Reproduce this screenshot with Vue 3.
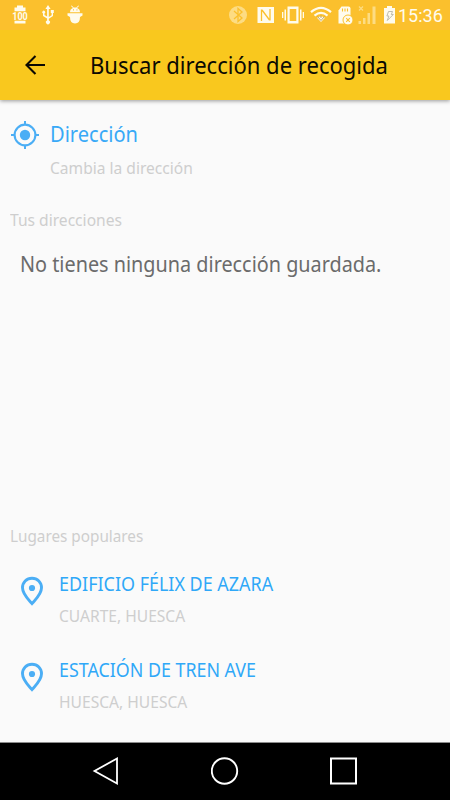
<script setup>
const places = [
  { name: 'EDIFICIO FÉLIX DE AZARA', town: 'CUARTE, HUESCA', key: 'azara' },
  { name: 'ESTACIÓN DE TREN AVE', town: 'HUESCA, HUESCA', key: 'tren' },
]
</script>

<template>
  <div class="screen">
    <div class="status">
      <svg class="status-icons" width="396" height="30" viewBox="0 0 396 30">
        <g fill="#fffbed">
          <path d="M17 5.500h6v2h2.500v4h-11v-4H17zM14.500 20.500h11v3h-11zM14 12h12v8H14z" />
          <path d="M12 11.500h16v9H12z" fill="#fbc02d" />
          <text x="12.200" y="20" class="battery-text" textLength="15.600" lengthAdjust="spacingAndGlyphs">100</text>
          <path d="M48 5l2.600 4h-1.800v8l2.800-1.800V13h-.8v-3h3v3H53v3l-4.200 2.700v1.800a2 2 0 1 1-1.700 0v-2L43 16v-2.500a1.500 1.500 0 1 1 1.500 0V15l2.600 1.500V9h-1.700z" />
          <path d="M70 12.300q0-3.300 3-4.300l-2-2 .7-.6L73.600 7.500h2.800L78.300 5.400l.7.600-2 2q3 1 3 4.300z" />
          <path d="M67.500 13.300h15v2.200l-2.500 1.500q0 6.500-5 6.500t-5-6.500l-2.500-1.500z" />
          <path d="M257.500 7h16.500v16h-16.500z" />
          <path d="M287.500 6.500h11v17h-11zM289.700 9v12h6.600V9z" fill-rule="evenodd" />
          <path d="M284.500 9.500h1.500v11h-1.500zM300 9.500h1.500v11H300zM282 12h1.300v6H282zM302.700 12h1.300v6h-1.300z" />
          <path d="M341.500 6.500h7q2 0 2 2v7.500l-4 7.500h-8V10.500z" />
          <path d="M387 6h5v2h3v15.500h-11V8h3z" />
          <circle cx="348" cy="20" r="5" stroke="#fbc02d" />
        </g>
        <path d="M73 9.800h.9M76.500 9.800h.9" stroke="#fbc02d" stroke-width="1.200" />
        <path d="M261.500 21V9.500M262 10l7.500 10M270 20.500V9" fill="none" stroke="#fbc02d" stroke-width="1.300" />
        <path d="M342.500 8.500v3M345 8.500v3M347.500 8.500v3M346.200 18.200l3.600 3.600M349.800 18.200l-3.600 3.600" stroke="#fbc02d" stroke-width="1.100" />
        <circle cx="238" cy="15" r="9" fill="#fddc83" />
        <path d="M234 11l8 7-4 3.500v-13l4 3.500-8 7" fill="none" stroke="#fbc02d" stroke-width="1.300" />
        <g fill="none" stroke="#fffbed" stroke-width="2.200">
          <path d="M311 12.200q10-8.500 20 0" /><path d="M314.500 15.600q6.500-5.600 13 0" />
        </g>
        <path d="M317 17.800q4-2.600 8 0l-4 4.200z" fill="#fffbed" />
        <path d="M317.500 16.500l3.500 4 3.500-4M321 15.500v2.500" fill="none" stroke="#b39d66" stroke-width=".9" />
        <g fill="#fddc83"><path d="M358.500 21h2.500v3h-2.500zM363 18h2.500v6H363zM367.500 13h2.500V24h-2.500zM372.500 6.500h3V24h-3z" /></g>
        <path d="M359 6.500l4 4M363 6.500l-4 4" stroke="#fddc83" stroke-width="1.200" />
        <path d="M388.500 11.500h4l-1.200 3h2l-6 6 1.600-4.500h-2z" fill="none" stroke="#b8b5a8" stroke-width=".9" />
      </svg>
      <span class="clock">15:36</span>
    </div>

    <header class="bar">
      <svg class="back" width="22" height="22" viewBox="0 0 22 22">
        <path d="M21 11H3M11.500 2L2.500 11l9 9" fill="none" stroke="#0c0a02" stroke-width="2.100" />
      </svg>
      <h1 class="title"><span class="fit fit-title">Buscar dirección de recogida</span></h1>
    </header>

    <main class="content">
      <section class="current">
        <svg class="target" width="30" height="30" viewBox="0 0 30 30">
          <circle cx="15" cy="15" r="10.400" fill="none" stroke="#4baef5" stroke-width="2.100" />
          <circle cx="15" cy="15" r="5.200" fill="#4baef5" />
          <path d="M15 1v4M15 25v4M1 15h4M25 15h4" stroke="#4baef5" stroke-width="2" />
        </svg>
        <div class="lines">
          <div class="heading"><span class="fit fit-heading">Dirección</span></div>
          <div class="small change"><span class="fit fit-change">Cambia la dirección</span></div>
        </div>
      </section>

      <h2 class="small label"><span class="fit fit-yours">Tus direcciones</span></h2>
      <p class="empty"><span class="fit fit-empty">No tienes ninguna dirección guardada.</span></p>

      <h2 class="small label popular"><span class="fit fit-popular">Lugares populares</span></h2>
      <ul class="places">
        <li v-for="p in places" :key="p.key" class="place">
          <svg class="pin" width="24" height="30" viewBox="0 0 24 30">
            <path d="M12 2.300c-5.500 0-9.500 4.200-9.500 9.500 0 6.500 5.500 11.200 9.500 15.700 4-4.500 9.500-9.200 9.500-15.700C21.500 6.500 17.500 2.300 12 2.300z" fill="none" stroke="#4baef5" stroke-width="2.900" />
            <circle cx="12" cy="12" r="3.100" fill="#4baef5" />
          </svg>
          <div class="lines">
            <div class="name"><span class="fit" :class="'fit-name-' + p.key">{{ p.name }}</span></div>
            <div class="small town"><span class="fit" :class="'fit-town-' + p.key">{{ p.town }}</span></div>
          </div>
        </li>
      </ul>
    </main>

    <nav class="nav">
      <svg width="28" height="30" viewBox="0 0 28 30"><path d="M25 2.500v25L2.500 15z" fill="none" stroke="#fff" stroke-width="1.800" /></svg>
      <svg width="28" height="30" viewBox="0 0 28 30"><circle cx="13.500" cy="15" r="12.700" fill="none" stroke="#fff" stroke-width="1.900" /></svg>
      <svg width="28" height="30" viewBox="0 0 28 30"><path d="M2 2.500h25v25H2z" fill="none" stroke="#fff" stroke-width="2" /></svg>
    </nav>
  </div>
</template>

<style>
body { margin: 0; }
</style>

<style scoped>
.screen {
  width: 450px;
  height: 800px;
  display: flex;
  flex-direction: column;
  background: #fafafa;
  font-family: "Noto Sans", sans-serif;
  overflow: hidden;
}
h1, h2, p, ul { margin: 0; padding: 0; font-weight: 400; }
ul { list-style: none; }
svg { display: block; flex: none; }
.status { height: 30px; flex: none; display: flex; align-items: center; background: #fbc02d; position: relative; z-index: 1; }
.battery-text { font: 700 10.500px Roboto, sans-serif; }
.clock { margin-left: 2px; font: 18px/30px Roboto, sans-serif; color: #fffbed; padding-top: 2px; }
.bar {
  height: 70px;
  flex: none;
  display: flex;
  align-items: center;
  padding-left: 24px;
  background: #f9c81e;
  box-shadow: 0 1px 4px rgba(0, 0, 0, .4);
}
.title { margin-left: 44px; font-size: 23px; line-height: 30px; color: #0c0a02; }
.fit { display: inline-block; transform-origin: 0 50%; white-space: nowrap; }
.fit-title { transform: scaleX(.958); }
.fit-heading { transform: scaleX(.912); }
.fit-change { transform: scaleX(.916); }
.fit-yours { transform: scaleX(.918); }
.fit-empty { transform: scaleX(.922); }
.fit-popular { transform: scaleX(.899); }
.fit-name-azara { transform: scaleX(.92); }
.fit-name-tren { transform: scaleX(.915); }
.fit-town-azara { transform: scaleX(.916); }
.fit-town-tren { transform: scaleX(.918); }
.content { flex: 1; min-height: 0; padding-top: 19.400px; }
.current { display: flex; padding-left: 10px; }
.target { margin-top: .6px; }
.current .lines { margin-left: 10px; }
.heading { font-size: 22px; line-height: 28px; color: #38a9f7; }
.small { font-size: 17px; line-height: 22px; color: #cecece; height: 22px; }
.change { margin-top: 9.600px; }
.label { padding-left: 10px; margin-top: 30px; }
.empty { padding-left: 20px; margin-top: 19px; font-size: 21.500px; line-height: 28px; height: 28px; color: #6b6b6b; }
.popular { margin-top: 247px; }
.places { padding: 24px 0 0 20px; }
.place { display: flex; height: 85.600px; }
.pin { margin-top: 5px; }
.place .lines { margin-left: 15px; }
.name { font-size: 19.500px; line-height: 26px; color: #2fa8f8; }
.town { margin-top: 8px; }
.nav {
  height: 58px;
  flex: none;
  display: flex;
  align-items: center;
  justify-content: space-between;
  padding: 0 93px 1px 92px;
  box-sizing: border-box;
  border-top: 1px solid #8c8c8c;
  background: #000;
}
</style>
